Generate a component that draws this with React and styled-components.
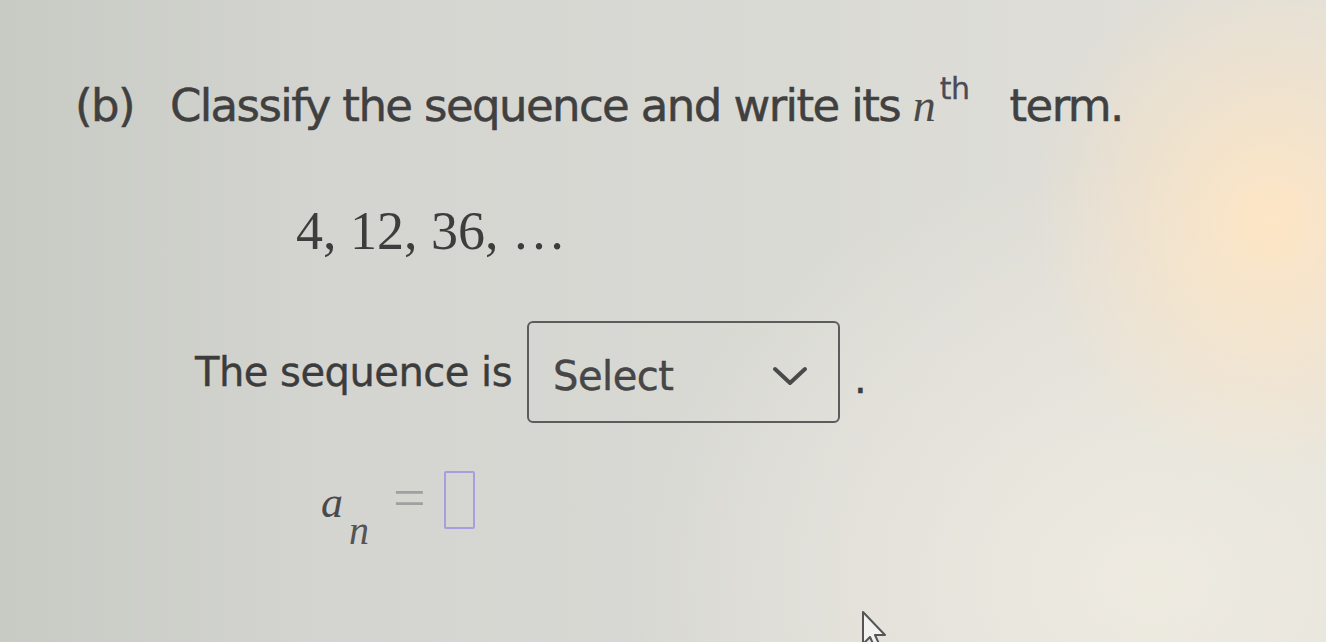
import styled, { createGlobalStyle } from 'styled-components'

const GlobalStyle = createGlobalStyle`
    html, body {
        margin: 0;
        padding: 0;
        width: 1326px;
        height: 642px;
        overflow: hidden;
    }
    body {
        background:
            radial-gradient(ellipse 240px 260px at 1270px 220px, rgba(255, 230, 196, 0.95), rgba(255, 230, 196, 0) 100%),
            radial-gradient(ellipse 520px 420px at 1150px 580px, rgba(240, 236, 226, 0.9), rgba(240, 236, 226, 0) 100%),
            linear-gradient(90deg, #c8cac4 0%, #d4d5d0 25%, #dadad5 60%, #e2e0d9 100%);
        font-family: "DejaVu Sans", Verdana, sans-serif;
        color: #434343;
    }
`

const Page = styled.div`
    position: relative;
    width: 1326px;
    height: 642px;
    padding: 76px 0 0 75px;
    box-sizing: border-box;
    display: flex;
    flex-direction: column;
`

const Heading = styled.div`
    display: flex;
    align-items: baseline;
    font-size: 45px;
    letter-spacing: -1.6px;
    line-height: 60px;
    color: #404040;
    -webkit-text-stroke: 0.5px #404040;
    white-space: nowrap;
`

const Label = styled.span`
    margin-right: 36px;
`

const MathVar = styled.span`
    font-family: "Liberation Serif", "Times New Roman", serif;
    font-style: italic;
    font-size: ${p => p.size || 46}px;
    letter-spacing: 0;
    color: #4a4a4a;
    -webkit-text-stroke: 0;
`

const Sup = styled.span`
    font-size: 30px;
    letter-spacing: -0.5px;
    position: relative;
    top: -22px;
    margin-left: 4px;
    margin-right: 40px;
    color: #4a4a58;
    -webkit-text-stroke: 0.3px #4a4a58;
`

const Sequence = styled.div`
    margin: 58px 0 0 221px;
    font-family: "Liberation Serif", "Times New Roman", serif;
    font-size: 54px;
    line-height: 64px;
    color: #3d3d3d;
`

const Row = styled.div`
    margin: 58px 0 0 120px;
    display: flex;
    align-items: center;
    font-size: 40px;
    letter-spacing: -0.5px;
    color: #3c3c3c;
    -webkit-text-stroke: 0.4px #3c3c3c;
`

const SelectBox = styled.div`
    width: 313px;
    height: 102px;
    margin-left: 15px;
    box-sizing: border-box;
    border: 2px solid #5c5c5c;
    border-radius: 6px;
    display: flex;
    align-items: center;
    justify-content: space-between;
    padding: 8px 30px 0 24px;
    font-size: 40px;
    color: #474747;
`

const Period = styled.span`
    margin-left: 14px;
    margin-top: 14px;
`

const Formula = styled.div`
    margin: 54px 0 0 246px;
    display: flex;
    align-items: flex-start;
    height: 90px;
`

const Sub = styled.span`
    font-family: "Liberation Serif", "Times New Roman", serif;
    font-style: italic;
    font-size: 40px;
    color: #555;
    margin: 30px 0 0 6px;
`

const Equals = styled.span`
    font-family: "Liberation Serif", serif;
    font-size: 58px;
    color: #a0a0a0;
    margin: -6px 18px 0 24px;
    line-height: 54px;
`

const AnswerBox = styled.div`
    width: 31px;
    height: 58px;
    box-sizing: border-box;
    border: 2.5px solid #a99de0;
    border-radius: 2px;
    margin-top: -6px;
`

const Cursor = styled.svg`
    position: absolute;
    left: 860px;
    top: 610px;
`

export default function App() {
    return (
        <>
            <GlobalStyle />
            <Page>
                <Heading>
                    <Label>(b)</Label>
                    <span>Classify the sequence and write its&nbsp;</span>
                    <MathVar size={46}>n</MathVar>
                    <Sup>th</Sup>
                    <span>term.</span>
                </Heading>

                <Sequence>4, 12, 36, …</Sequence>

                <Row>
                    <span>The sequence is</span>
                    <SelectBox>
                        <span>Select</span>
                        <svg width="36" height="22" viewBox="0 0 36 22">
                            <path d="M3 4 L18 18 L33 4" fill="none" stroke="#4a4a4a" strokeWidth="4" strokeLinecap="round" strokeLinejoin="round" />
                        </svg>
                    </SelectBox>
                    <Period>.</Period>
                </Row>

                <Formula>
                    <MathVar size={44}>a</MathVar>
                    <Sub>n</Sub>
                    <Equals>=</Equals>
                    <AnswerBox />
                </Formula>

                <Cursor width="34" height="40" viewBox="0 0 34 40">
                    <path d="M3 2 L3 34 L10 27 L15 38 L20 36 L15 25 L25 25 Z" fill="#f2f2f0" stroke="#555" strokeWidth="2" strokeLinejoin="round" />
                </Cursor>
            </Page>
        </>
    )
}
